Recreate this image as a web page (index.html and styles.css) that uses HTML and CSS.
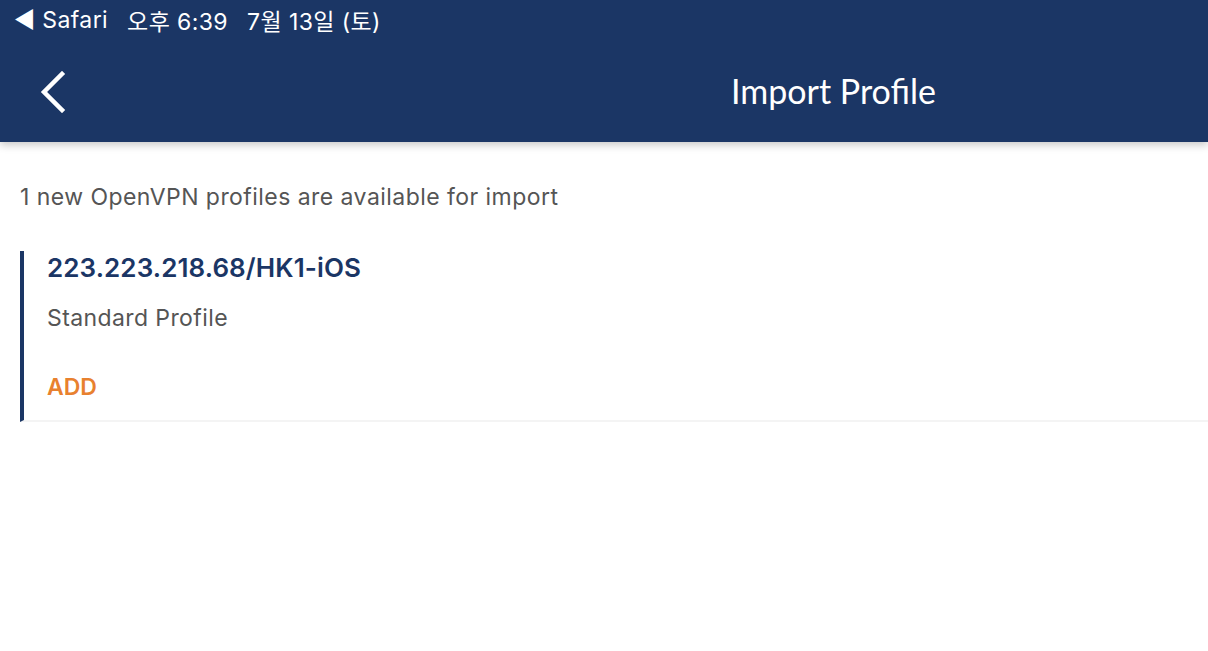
FILE: index.html
```html
<!DOCTYPE html>
<html lang="ko">
<head>
	<meta charset="UTF-8">
	<title>Import Profile</title>
	<meta name="viewport" content="width=device-width, initial-scale=1">
	<link rel="stylesheet" href="styles.css">
</head>
<body>
<header class="topbar">
	<div class="status">
		<span class="status-back">◀ Safari</span>
		<span>오후 6:39</span>
		<span>7월 13일 (토)</span>
	</div>
	<nav class="navbar">
		<button class="back" type="button" aria-label="Back">
			<svg width="28" height="42" viewBox="0 0 28 42"><path d="M24 3 L6 21 L24 39" fill="none" stroke="#fff" stroke-width="4.5" stroke-linecap="square"/></svg>
		</button>
		<h1 class="title">Import Profile</h1>
	</nav>
</header>

<main class="content">
	<p class="intro">1 new OpenVPN profiles are available for import</p>
	<section class="profile">
		<h2 class="profile-name">223.223.218.68/HK1-iOS</h2>
		<p class="profile-type">Standard Profile</p>
		<button class="add" type="button">ADD</button>
	</section>
</main>
</body>
</html>
```

FILE: styles.css
```css
*,
::before,
::after {
	box-sizing: border-box;
}
body {
	margin: 0;
	background: #fff;
	font-family: "Inter", "Noto Sans", "Noto Sans CJK KR", sans-serif;
}
.topbar {
	background: #1b3665;
	color: #fff;
	height: 142px;
	box-shadow: 0 3px 8px rgba(0, 0, 0, 0.22);
	position: relative;
}
.status {
	display: flex;
	gap: 19px;
	height: 40px;
	align-items: center;
	padding-left: 14px;
	font-size: 23px;
	letter-spacing: 0.4px;
	font-family: "Inter", "Noto Sans CJK KR", sans-serif;
}
.navbar {
	display: flex;
	align-items: center;
	height: 102px;
	padding-bottom: 2px;
}
.back {
	background: none;
	border: 0;
	padding: 0;
	margin-left: 38px;
	margin-top: 4px;
	display: flex;
}
.title {
	margin: 0 0 0 665px;
	font-size: 34px;
	font-weight: 400;
	font-family: "Lato", "Open Sans", sans-serif;
}
.content {
	padding: 40px 0 0 20px;
}
.intro {
	margin: 0 0 39px;
	font-size: 23px;
	line-height: 30px;
	color: #555;
	letter-spacing: 0.45px;
}
.profile {
	border-left: 4px solid #1b3665;
	border-bottom: 2px solid #f4f4f4;
	padding: 2px 0 18px 23px;
}
.profile-name {
	margin: 0;
	font-size: 26px;
	font-weight: 600;
	color: #1b3665;
	line-height: 30px;
	letter-spacing: 0.1px;
}
.profile-type {
	margin: 20px 0 0;
	font-size: 23px;
	color: #555;
	line-height: 30px;
	letter-spacing: 0.4px;
}
.add {
	display: block;
	margin-top: 39px;
	background: none;
	border: 0;
	padding: 0;
	font: inherit;
	font-size: 23px;
	font-weight: 600;
	color: #e8812f;
	line-height: 30px;
}
```
